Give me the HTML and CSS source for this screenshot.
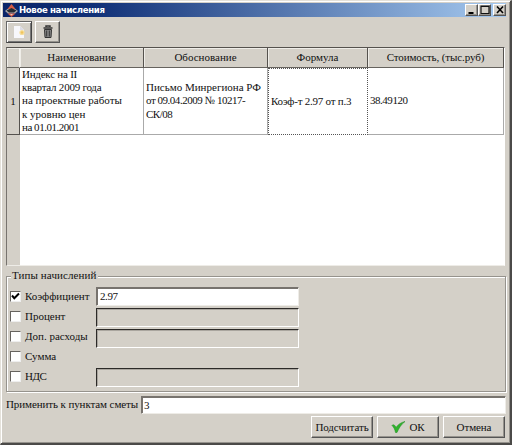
FILE: index.html
```html
<!DOCTYPE html>
<html lang="ru">
<head>
<meta charset="utf-8">
<title>Новое начисления</title>
<link rel="stylesheet" href="styles.css">
</head>
<body>
<div class="window">
  <header class="titlebar">
    <svg class="logo" width="13" height="13" viewBox="0 0 13 13"><path d="M6.500 0 10.500 5h-8z" fill="#d65d45"/><path d="M0 7l2.500-2h8L13 7l-3 2.500H3z" fill="#aaa9ac"/><path d="M1.500 6.500 6.500 4l5 2.500L9 8.500H4z" fill="#252c35"/><path d="M2.500 9.500h8l-4 3.500z" fill="#d65d45"/><path d="M5 10h3l-1.500 1.500z" fill="#e7c9be"/></svg>
    <h1>Новое начисления</h1>
    <div class="controls">
      <button><svg width="10" height="10" viewBox="0 0 10 10"><path d="M1.5 8h5" stroke="#000" stroke-width="2"/></svg></button>
      <button><svg width="10" height="10" viewBox="0 0 10 10"><path d="M1 1h8v7.500H1z M1 1.500h8" fill="none" stroke="#111" stroke-width="1.2"/></svg></button>
      <button class="close"><svg width="10" height="10" viewBox="0 0 10 10"><path d="m2 1.500 6 6.500m0-6.500-6 6.500" stroke="#000" stroke-width="1.600"/></svg></button>
    </div>
  </header>
  <nav class="toolbar">
    <button class="tool active"><svg width="14" height="14" viewBox="0 0 14 14"><path d="M2 1h6l4 4v8H2z" fill="#f7f7fb"/><path d="M8 1v4h4" fill="#dcdce5"/><circle cx="10" cy="7.5" r="2.6" fill="#f5dc98"/><circle cx="10" cy="7.5" r="1.2" fill="#f0c35c"/></svg></button>
    <button class="tool"><svg width="12" height="14" viewBox="0 0 12 14"><path d="M4 2V1h4v1M1.5 3h9" fill="none" stroke="#333" stroke-width="1.5"/><path d="M2.5 4.5h7l-.5 8H3z" fill="#888" stroke="#333"/><path d="M4.7 5.5v6m2.600-6v6" stroke="#333"/></svg></button>
  </nav>
  <main class="grid">
    <div class="head corner"></div>
    <div class="head">Наименование</div>
    <div class="head">Обоснование</div>
    <div class="head">Формула</div>
    <div class="head cost">Стоимость, (тыс.руб)</div>
    <div class="num">1</div>
    <div class="cell"><span class="snug">Индекс на II</span><span class="snug">квартал 2009 года</span><span>на проектные работы</span><span>к уровню цен</span><span class="tight">на 01.01.2001</span></div>
    <div class="cell"><span>Письмо Минрегиона РФ</span><span class="tight">от 09.04.2009 № 10217-</span><span class="tight">СК/08</span></div>
    <div class="cell focus"><span class="snug">Коэф-т 2.97 от п.3</span></div>
    <div class="cell"><span class="tight">38.49120</span></div>
    <div class="gutter"></div>
  </main>
  <section class="types">
    <h2>Типы начислений</h2>
    <div class="row"><i class="check"><svg width="9" height="9" viewBox="0 0 9 9"><path d="m1 3.5 2.3 2.7L8 1.5" fill="none" stroke="#000" stroke-width="2"/></svg></i><label>Коэффициент</label><div class="field on">2.97</div></div>
    <div class="row"><i class="check"></i><label>Процент</label><div class="field drop1"></div></div>
    <div class="row"><i class="check"></i><label>Доп. расходы</label><div class="field drop2"></div></div>
    <div class="row"><i class="check"></i><label>Сумма</label></div>
    <div class="row"><i class="check"></i><label class="tight">НДС</label><div class="field drop1"></div></div>
  </section>
  <div class="apply"><label>Применить к пунктам сметы</label><div class="field on">3</div></div>
  <footer><button>Подсчитать</button><button><svg width="15" height="12" viewBox="0 0 15 12"><path d="M1 4.500c1-1.500 3-.5 4 2C7 3.500 10 1.500 14 .5 10 3.500 8 7 6 11.500H4.500C4 9 3 6 1 4.500z" fill="#2fb52b" stroke="#27922a" stroke-width=".6"/></svg><span>ОК</span></button><button>Отмена</button></footer>
</div>
</body>
</html>
```
FILE: styles.css
```css
* { box-sizing: border-box; }
body { margin: 0; width: 512px; height: 445px; overflow: hidden; background: #d4d0c8; font: 11px/13px "Liberation Serif", serif; color: #111; }
button { margin: 0; padding: 0; font: inherit; color: inherit; background: #d4d0c8; display: flex; align-items: center; justify-content: center; border: 1px solid; border-color: #fff #555 #555 #fff; box-shadow: inset -1px -1px #96938d; }
.window { width: 512px; height: 445px; display: flex; flex-direction: column; border: solid; border-width: 1px 2px 2px 1px; border-color: #e4e1da #4b4a48 #4b4a48 #e4e1da; padding: 2px 4px 0 2px; box-shadow: inset 1px 1px #fff, inset -1px -1px #96938d; }
.titlebar { height: 14px; flex: none; display: flex; align-items: center; background: linear-gradient(90deg, #0b2569, #103077 18%, #a6caf0); padding: 0 0 0 2px; }
.logo { flex: none; }
h1 { margin: 0 0 0 1px; font: bold 9.5px/14px "DejaVu Sans Condensed", "DejaVu Sans", sans-serif; letter-spacing: -.35px; color: #fff; white-space: nowrap; }
.controls { margin-left: auto; display: flex; }
.controls button { width: 13px; height: 12px; }
.controls .close { margin-left: 2px; }
.toolbar { height: 30px; flex: none; padding: 4px 0 0 3px; display: flex; gap: 3px; }
.tool { width: 25px; height: 22px; }
.tool.active { width: 26px; border-color: #666 #444 #444 #666; box-shadow: inset 1px 1px #fff, inset -1px -1px #777; }
.grid { height: 219px; width: 499px; flex: none; margin-left: 3px; display: grid; grid-template: 20px 67px 1fr / 13px 124px 124px 100px 136px; background: #fff; border: 1px solid; border-color: #55524e #fff #eeece7 #77736e; white-space: nowrap; }
.head { background: #d4d0c8; border-right: 1px solid #55524e; border-bottom: 1px solid #66635e; display: flex; align-items: center; justify-content: center; box-shadow: inset 1px 1px #efede8; }
.corner { border-right-color: #f5f3ef; }
.cost { letter-spacing: -.1px; }
.num, .gutter { background: #d4d0c8; border-right: 1px solid #55524e; display: flex; align-items: center; justify-content: center; }
.num { border-bottom: 1px solid #55524e; }
.gutter { border-right-color: #d4d0c8; }
.cell { border-right: 1px solid #aaa; border-bottom: 1px solid #aaa; display: flex; flex-direction: column; justify-content: center; align-items: flex-start; padding-left: 2px; line-height: 13.33px; }
.cell.focus { border: 1px dotted #555; padding-left: 2px; }
.snug { letter-spacing: -.24px; }
.tight { letter-spacing: -.47px; }
.types { position: relative; width: 500px; height: 116px; margin: 10px 0 0 3px; flex: none; border: 1px solid #96938d; box-shadow: inset 1px 1px #fff, 1px 1px #fff; padding: 9px 0 0 3px; }
h2 { position: absolute; left: 4px; top: -8px; margin: 0; padding: 0 1px; background: #d4d0c8; font: inherit; letter-spacing: .1px; white-space: nowrap; }
.row { display: flex; height: 20px; align-items: center; white-space: nowrap; }
.check { width: 11px; height: 11px; flex: none; background: #fff; border: 1px solid; border-color: #66635e #eee #eee #66635e; display: flex; margin-right: 4px; }
.row label { width: 71px; flex: none; }
.field { width: 203px; height: 19px; flex: none; border: 1px solid; border-color: #2c2a28 #fff #fff #2c2a28; box-shadow: inset 1px 1px #aaa69f; padding: 1px 0 0 3px; line-height: 15px; letter-spacing: -.4px; }
.on { background: #fff; border-color: #77736e #eeece7 #eeece7 #77736e; box-shadow: inset 1px 1px #77736e; }
.drop1 { margin-top: 3px; }
.drop2 { margin-top: 5px; }
.apply { display: flex; align-items: center; margin: 3px 0 0 3px; height: 19px; flex: none; width: 500px; white-space: nowrap; }
.apply label { width: 135px; flex: none; letter-spacing: -.1px; }
.apply .field { width: auto; flex: 1; height: 18px; padding-left: 2px; }
footer { display: flex; justify-content: flex-end; gap: 4px; padding: 2px 1px 0 0; }
footer button { width: 62px; height: 22px; gap: 3px; letter-spacing: -.1px; }
```
